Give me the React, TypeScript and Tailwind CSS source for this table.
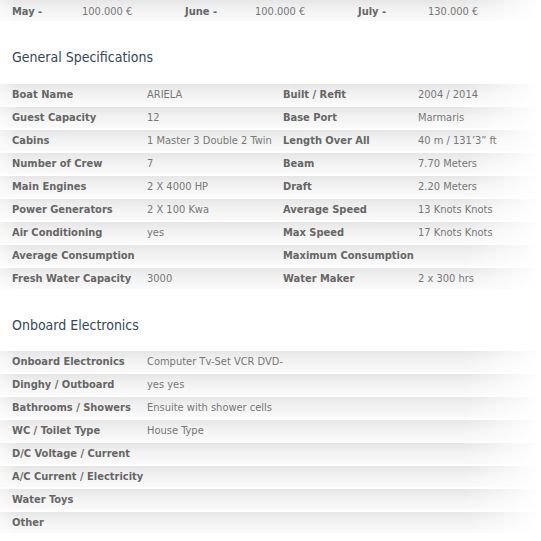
import React from "react";

const prices = [
  { month: "May -", price: "100.000 €" },
  { month: "June -", price: "100.000 €" },
  { month: "July -", price: "130.000 €" },
];

const general: [string, string, string, string][] = [
  ["Boat Name", "ARIELA", "Built / Refit", "2004 / 2014"],
  ["Guest Capacity", "12", "Base Port", "Marmaris"],
  ["Cabins", "1 Master 3 Double 2 Twin", "Length Over All", "40 m / 131’3” ft"],
  ["Number of Crew", "7", "Beam", "7.70 Meters"],
  ["Main Engines", "2 X 4000 HP", "Draft", "2.20 Meters"],
  ["Power Generators", "2 X 100 Kwa", "Average Speed", "13 Knots Knots"],
  ["Air Conditioning", "yes", "Max Speed", "17 Knots Knots"],
  ["Average Consumption", "", "Maximum Consumption", ""],
  ["Fresh Water Capacity", "3000", "Water Maker", "2 x 300 hrs"],
];

const electronics: [string, string][] = [
  ["Onboard Electronics", "Computer Tv-Set VCR DVD-"],
  ["Dinghy / Outboard", "yes yes"],
  ["Bathrooms / Showers", "Ensuite with shower cells"],
  ["WC / Toilet Type", "House Type"],
  ["D/C Voltage / Current", ""],
  ["A/C Current / Electricity", ""],
  ["Water Toys", ""],
  ["Other", ""],
];

// striped row background: grey on top, lighter below, fading out to the right
const rowBg =
  "bg-[linear-gradient(to_right,rgba(255,255,255,0.5)_0%,rgba(255,255,255,0)_3%,rgba(255,255,255,0)_86%,#fff_100%),linear-gradient(to_bottom,#e6e6e6_0%,#f2f2f2_45%,#fafafa_100%)]";

const label = "pl-3 font-bold text-[11px] leading-[21px] text-[#666] whitespace-nowrap";
const value = "pl-3 text-[11px] leading-[21px] text-[#777] whitespace-nowrap";

function Heading({ children, h = "h-[61px]" }: { children: React.ReactNode; h?: string }) {
  return (
    <h2 className={`${h} pt-[27px] pl-3 text-[14px] leading-[18px] text-[#34465a]`}>
      {children}
    </h2>
  );
}

export default function App() {
  return (
    <div
      className="w-[541px] h-[541px] overflow-hidden bg-white"
      style={{ fontFamily: "'DejaVu Sans Condensed', 'DejaVu Sans', sans-serif" }}
    >
      {/* price strip */}
      <div className={`flex h-[21px] items-center pt-[2px] ${rowBg}`}>
        {prices.map((p) => (
          <div key={p.month} className="flex w-[173px]">
            <span className={`${label} w-[82px]`}>{p.month}</span>
            <span className="text-[11px] leading-[21px] text-[#777]">{p.price}</span>
          </div>
        ))}
      </div>

      <Heading>General Specifications</Heading>
      <div>
        {general.map((r) => (
          <div
            key={r[0]}
            className={`grid grid-cols-[135px_136px_135px_135px] h-[23px] items-center border-t-2 border-white ${rowBg}`}
          >
            <span className={label}>{r[0]}</span>
            <span className={value}>{r[1]}</span>
            <span className={label}>{r[2]}</span>
            <span className={value}>{r[3]}</span>
          </div>
        ))}
      </div>

      <Heading h="h-[60px]">Onboard Electronics</Heading>
      <div>
        {electronics.map((r) => (
          <div
            key={r[0]}
            className={`grid grid-cols-[135px_406px] h-[23px] items-center border-t-2 border-white ${rowBg}`}
          >
            <span className={label}>{r[0]}</span>
            <span className={value}>{r[1]}</span>
          </div>
        ))}
      </div>
    </div>
  );
}
